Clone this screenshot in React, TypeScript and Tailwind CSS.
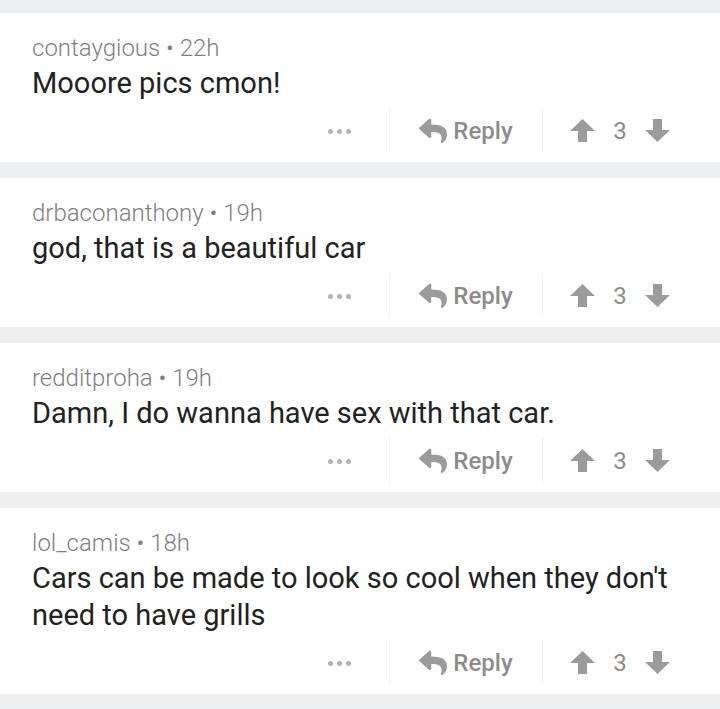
import { FaReply } from 'react-icons/fa';

type Comment = {
  author: string;
  age: string;
  body: string;
  score: number;
};

const COMMENTS: Comment[] = [
  { author: 'contaygious', age: '22h', body: 'Mooore pics cmon!', score: 3 },
  { author: 'drbaconanthony', age: '19h', body: 'god, that is a beautiful car', score: 3 },
  { author: 'redditproha', age: '19h', body: 'Damn, I do wanna have sex with that car.', score: 3 },
  {
    author: 'lol_camis',
    age: '18h',
    body: "Cars can be made to look so cool when they don't need to have grills",
    score: 3,
  },
];

const Arrow = ({ down = false }: { down?: boolean }) => (
  <svg
    width="25"
    height="23"
    viewBox="0 0 25 23"
    className={down ? 'rotate-180' : ''}
    fill="#9b9b9b"
  >
    <polygon points="12.5,0 25,12 17,12 17,23 8,23 8,12 0,12" />
  </svg>
);

const CommentCard = ({ comment }: { comment: Comment }) => {
  return (
    <div className="bg-white pl-8 pr-[20px] pt-[21px] pb-[9px]">
      <p className="text-[24px] font-light leading-[28px] text-[#7f7f7f]">
        {comment.author} • {comment.age}
      </p>
      <p className="mt-[3px] text-[29px] leading-[37px] text-[#222222]">{comment.body}</p>
      <div className="mt-[6px] flex h-[45px] justify-end">
        <div className="flex w-[100px] items-center justify-center gap-[4px] pt-[2px]">
          <span className="h-[5px] w-[5px] rounded-full bg-[#b3b3b3]" />
          <span className="h-[5px] w-[5px] rounded-full bg-[#b3b3b3]" />
          <span className="h-[5px] w-[5px] rounded-full bg-[#b3b3b3]" />
        </div>
        <div className="w-px bg-[#f1f1f1]" />
        <div className="flex w-[152px] items-center justify-center gap-[6px] text-[#8c8c8c]">
          <FaReply size={28} color="#9b9b9b" />
          <span className="text-[24px] font-medium leading-none">Reply</span>
        </div>
        <div className="w-px bg-[#f1f1f1]" />
        <div className="mr-[3px] flex w-[154px] items-center justify-center gap-[18px]">
          <Arrow />
          <span className="text-[24px] leading-none text-[#8c8c8c]">{comment.score}</span>
          <Arrow down />
        </div>
      </div>
    </div>
  );
};

export default function App() {
  return (
    <div className="flex min-h-screen flex-col gap-4 bg-[#edeef0] pt-[13px] font-['Roboto',sans-serif]">
      {COMMENTS.map((c) => (
        <CommentCard key={c.author} comment={c} />
      ))}
    </div>
  );
}
